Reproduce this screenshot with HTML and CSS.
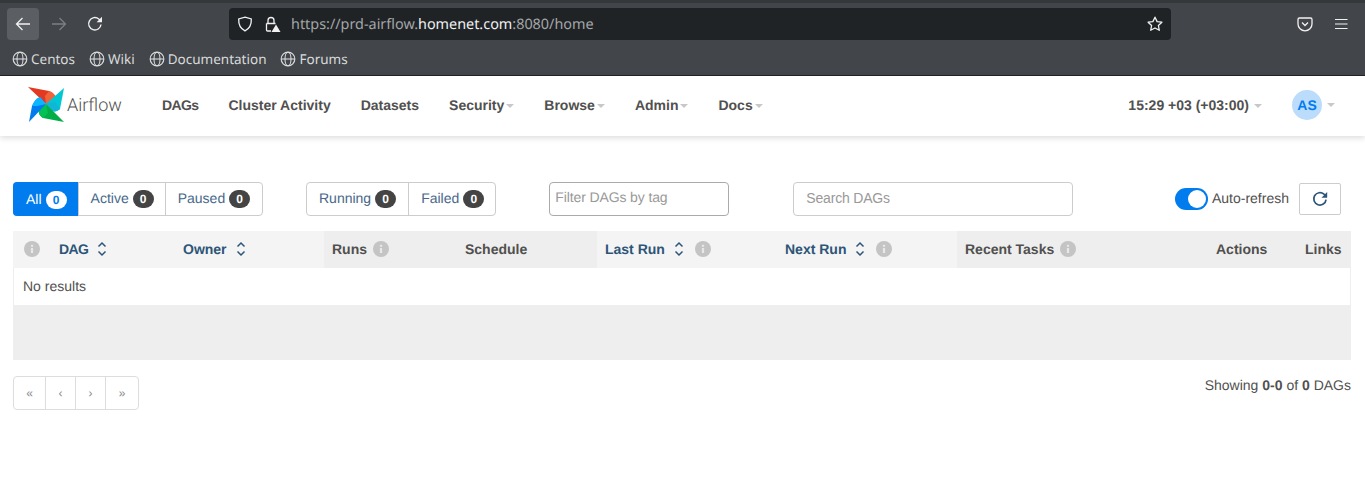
FILE: index.html
```html
<!DOCTYPE html>
<html lang="en">
<head>
    <meta charset="UTF-8">
    <meta name="viewport" content="width=device-width, initial-scale=1.0">
    <title>Airflow - DAGs</title>
    <link rel="stylesheet" href="styles.css">
</head>
<body>
    <svg class="icon-defs" width="0" height="0" aria-hidden="true">
        <defs>
            <symbol id="globe" viewBox="0 0 16 16">
                <circle cx="8" cy="8" r="6.8" fill="none" stroke="currentColor" stroke-width="1.2"/>
                <ellipse cx="8" cy="8" rx="3" ry="6.8" fill="none" stroke="currentColor" stroke-width="1.1"/>
                <path d="M1.2 8h13.6" stroke="currentColor" stroke-width="1.1"/>
            </symbol>
            <symbol id="sort" viewBox="0 0 10 16">
                <path d="M1.500 5.500 5 2l3.500 3.500M1.500 10.500 5 14l3.500-3.500" fill="none" stroke="currentColor" stroke-width="1.500"/>
            </symbol>
            <symbol id="info" viewBox="0 0 16 16">
                <circle cx="8" cy="8" r="8" fill="#c4c4c4"/>
                <rect x="6.900" y="7" width="2.200" height="5" fill="#e8e8e8"/>
                <rect x="6.900" y="3.800" width="2.200" height="2" fill="#e8e8e8"/>
            </symbol>
        </defs>
    </svg>

    <header class="browser">
        <div class="browser-toolbar">
            <div class="nav-buttons">
                <button class="nav-btn nav-btn-active">
                    <svg width="16" height="16" viewBox="0 0 16 16"><path d="M15 8H1.500M7.500 2 1.500 8l6 6" fill="none" stroke="#f1f1f1" stroke-width="1.300"/></svg>
                </button>
                <button class="nav-btn">
                    <svg width="16" height="16" viewBox="0 0 16 16"><path d="M1 8h13.500M8.500 2l6 6-6 6" fill="none" stroke="#7c7f82" stroke-width="1.300"/></svg>
                </button>
                <button class="nav-btn">
                    <svg width="16" height="16" viewBox="0 0 16 16"><path d="M14 8.500A6.200 6.200 0 1 1 11.800 3L14 5" fill="none" stroke="#f1f1f1" stroke-width="1.400"/><path d="M15 .8v5.400H9.600z" fill="#f1f1f1"/></svg>
                </button>
            </div>
            <div class="urlbar">
                <svg class="url-shield" width="16" height="16" viewBox="0 0 16 16"><path d="M8 1.200 14.300 3c.3 5.800-1.700 9.600-6.300 11.900C3.400 12.600 1.400 8.800 1.700 3z" fill="none" stroke="#f1f1f1" stroke-width="1.300"/></svg>
                <svg class="url-lock" width="17" height="17" viewBox="0 0 17 17"><path d="M4 7V4.500a3 3 0 0 1 6 0V7M2.500 7.500h9M7 15H3.500a1 1 0 0 1-1-1V7.500" fill="none" stroke="#f1f1f1" stroke-width="1.300"/><path d="M12 8.500l4.500 7.500h-9z" fill="#f1f1f1"/></svg>
                <span class="url-text">https://prd-airflow.<b>homenet.com</b>:8080/home</span>
                <svg class="url-star" width="16" height="16" viewBox="0 0 16 16"><path d="M8 1.200l2.100 4.400 4.800.6-3.500 3.300.9 4.800L8 12l-4.300 2.300.9-4.800L1.100 6.200l4.800-.6z" fill="none" stroke="#f1f1f1" stroke-width="1.300" stroke-linejoin="round"/></svg>
            </div>
            <div class="toolbar-right">
                <svg width="16" height="16" viewBox="0 0 16 16"><path d="M2.500 2h11A1.500 1.500 0 0 1 15 3.500V8A7 6.800 0 0 1 1 8V3.500A1.500 1.500 0 0 1 2.500 2z" fill="none" stroke="#f1f1f1" stroke-width="1.300"/><path d="M5 6.500l3 3 3-3" fill="none" stroke="#f1f1f1" stroke-width="1.300"/></svg>
                <svg width="14" height="12" viewBox="0 0 14 12"><path d="M1 1.500h12.500M1 6h12.500M1 10.500h12.500" stroke="#f1f1f1" stroke-width="1.200"/></svg>
            </div>
        </div>
        <div class="bookmarks">
            <a class="bookmark"><svg width="16" height="16"><use href="#globe"/></svg>Centos</a>
            <a class="bookmark"><svg width="16" height="16"><use href="#globe"/></svg>Wiki</a>
            <a class="bookmark"><svg width="16" height="16"><use href="#globe"/></svg>Documentation</a>
            <a class="bookmark"><svg width="16" height="16"><use href="#globe"/></svg>Forums</a>
        </div>
    </header>

    <nav class="navbar">
        <a class="brand">
            <svg class="brand-logo" width="37" height="37" viewBox="0 0 37 37">
                <path d="M0 1 21 5C26 7 29 11 28 14L18 18Z" fill="#e43921"/>
                <path d="M21 5C26 7 29 11 28 14L18 18L17 10Z" fill="#f0643c"/>
                <path d="M36 2 32 23C29 26 25 26 22 24L18 18Z" fill="#00c7d4"/>
                <path d="M32 23C29 26 25 26 22 24L18 18L27 16Z" fill="#11b5d8"/>
                <path d="M36 36 15 32C12 30 10 27 11 24L18 18Z" fill="#00ad46"/>
                <path d="M15 32C12 30 10 27 11 24L18 18L20 27Z" fill="#04c155"/>
                <path d="M1 36 4 20C6 15 9 12 12 11L18 18Z" fill="#017cee"/>
                <path d="M4 20C6 15 9 12 12 11L18 18L9 20Z" fill="#0cb6ff"/>
            </svg>
            <span class="brand-name">Airflow</span>
        </a>
        <ul class="nav-links">
            <li><a class="tight">DAGs</a></li>
            <li><a>Cluster Activity</a></li>
            <li><a>Datasets</a></li>
            <li><a class="caret">Security</a></li>
            <li><a class="caret">Browse</a></li>
            <li><a class="caret">Admin</a></li>
            <li><a class="caret">Docs</a></li>
        </ul>
        <div class="nav-right">
            <span class="clock caret">15:29 +03 (+03:00)</span>
            <span class="user caret"><span class="avatar">AS</span></span>
        </div>
    </nav>

    <main class="content">
        <div class="toolbar">
            <div class="btn-group group-status">
                <a class="btn btn-active">All <span class="badge">0</span></a>
                <a class="btn">Active <span class="badge">0</span></a>
                <a class="btn">Paused <span class="badge">0</span></a>
            </div>
            <div class="btn-group group-state">
                <a class="btn">Running <span class="badge">0</span></a>
                <a class="btn">Failed <span class="badge">0</span></a>
            </div>
            <div class="tag-filter">Filter DAGs by tag</div>
            <input class="search" type="text" placeholder="Search DAGs">
            <div class="refresh">
                <span class="switch"></span>
                <span class="refresh-label">Auto-refresh</span>
                <button class="refresh-btn">
                    <svg width="16" height="16" viewBox="0 0 14 14"><path d="M12.300 7.500A5.400 5.400 0 1 1 10.500 2.800L12 4" fill="none" stroke="#2d5578" stroke-width="1.500"/><path d="M13.300.8v5H8.300z" fill="#2d5578"/></svg>
                </button>
            </div>
        </div>

        <table class="dag-table">
            <thead>
                <tr>
                    <th class="col-info sortable"><svg class="info" width="16" height="16"><use href="#info"/></svg></th>
                    <th class="col-dag sortable"><a class="tight">DAG</a><svg class="sort" width="10" height="16"><use href="#sort"/></svg></th>
                    <th class="col-owner sortable"><a>Owner</a><svg class="sort" width="10" height="16"><use href="#sort"/></svg></th>
                    <th class="col-runs">Runs<svg class="info" width="16" height="16"><use href="#info"/></svg></th>
                    <th class="col-schedule">Schedule</th>
                    <th class="col-last sortable"><a>Last Run</a><svg class="sort" width="10" height="16"><use href="#sort"/></svg><svg class="info" width="16" height="16"><use href="#info"/></svg></th>
                    <th class="col-next sortable"><a>Next Run</a><svg class="sort" width="10" height="16"><use href="#sort"/></svg><svg class="info" width="16" height="16"><use href="#info"/></svg></th>
                    <th class="col-tasks">Recent Tasks<svg class="info" width="16" height="16"><use href="#info"/></svg></th>
                    <th class="col-actions">Actions</th>
                    <th class="col-links">Links</th>
                </tr>
            </thead>
            <tbody>
                <tr class="empty-row"><td colspan="10">No results</td></tr>
                <tr class="filler-row"><td colspan="10"></td></tr>
            </tbody>
        </table>

        <div class="table-footer">
            <ul class="pagination">
                <li>«</li>
                <li>‹</li>
                <li>›</li>
                <li>»</li>
            </ul>
            <p class="showing">Showing <b>0-0</b> of <b>0</b> DAGs</p>
        </div>
    </main>
</body>
</html>
```

FILE: styles.css
```css
* {
    box-sizing: border-box;
}

body {
    margin: 0;
    background: #fff;
    color: #51504f;
    font-family: 'Liberation Sans', Arial, sans-serif;
    font-size: 14px;
    text-rendering: geometricPrecision;
    overflow: hidden;
}

.icon-defs {
    position: absolute;
}

.tight {
    letter-spacing: -0.6px;
}

/* browser frame */
.browser {
    height: 76px;
    background: #42464a;
    border-top: 3px solid #35383b;
    border-bottom: 1px solid #202326;
    color: #f1f1f1;
    font-family: 'Noto Sans', sans-serif;
}

.browser-toolbar {
    display: flex;
    align-items: center;
    height: 38px;
    padding: 4px 0 0 7px;
}

.nav-buttons {
    display: flex;
    gap: 4px;
    width: 222px;
}

.nav-btn {
    display: flex;
    align-items: center;
    justify-content: center;
    width: 32px;
    height: 32px;
    padding: 0;
    border: none;
    border-radius: 4px;
    background: none;
}

.nav-btn-active {
    background: #5b5f63;
}

.urlbar {
    display: flex;
    align-items: center;
    width: 942px;
    height: 32px;
    padding: 0 8px;
    border-radius: 4px;
    background: #1f2326;
}

.url-lock {
    margin-left: 11px;
}

.url-text {
    margin-left: 10px;
    flex: 1;
    color: #a4a6a8;
    font-size: 14.400px;
}

.url-text b {
    color: #f1f1f1;
    font-weight: 400;
}

.toolbar-right {
    display: flex;
    align-items: center;
    gap: 21px;
    margin-left: 126px;
}

.bookmarks {
    display: flex;
    gap: 14px;
    padding: 9px 0 0 12px;
    font-size: 13.500px;
    color: #d9dadb;
}

.bookmark {
    display: flex;
    align-items: center;
    gap: 3px;
}

/* airflow navbar */
.navbar {
    display: flex;
    align-items: center;
    height: 60px;
    padding: 0 30px 2px 28px;
    box-shadow: 0 2px 6px rgba(0, 0, 0, 0.14);
}

.brand {
    display: flex;
    align-items: center;
    width: 120px;
}

.brand-logo {
    margin-top: -2px;
}

.brand-name {
    margin-left: 2px;
    color: #51504f;
    font-family: 'Roboto', sans-serif;
    font-size: 18px;
    font-weight: 300;
}

.nav-links {
    display: flex;
    gap: 30px;
    margin: 0 0 0 14px;
    padding: 0;
    list-style: none;
    font-weight: 700;
}

.caret::after {
    content: '';
    display: inline-block;
    margin-left: 2px;
    vertical-align: 2px;
    border-top: 4px solid #c8c8c8;
    border-left: 4px solid transparent;
    border-right: 4px solid transparent;
}

.nav-right {
    display: flex;
    align-items: center;
    margin-left: auto;
    font-weight: 700;
}

.clock::after {
    margin-left: 5px;
}

.user {
    display: flex;
    align-items: center;
    margin-left: 30px;
}

.user::after {
    margin-left: 5px;
    vertical-align: 0;
}

.avatar {
    display: flex;
    align-items: center;
    justify-content: center;
    width: 30px;
    height: 30px;
    border-radius: 50%;
    background: #bbdcfb;
    color: #017cee;
}

/* filters */
.content {
    padding: 46px 14px 0 13px;
}

.toolbar {
    display: flex;
    align-items: center;
    height: 34px;
}

.btn-group {
    display: flex;
    height: 34px;
    border: 1px solid #ccc;
    border-radius: 4px;
    line-height: 30px;
}

.group-status {
    width: 250px;
}

.group-state {
    margin-left: 43px;
}

.btn {
    display: flex;
    align-items: center;
    gap: 4px;
    padding: 0 11px 2px 12px;
    color: #47688a;
    border-left: 1px solid #ccc;
}

.btn:first-child {
    border-left: none;
}

.group-state .btn:first-child {
    padding-right: 12px;
}

.btn-active {
    margin: -1px 0 -1px -1px;
    padding: 0 11px 0 13px;
    background: #017cee;
    color: #fff;
    border-radius: 4px 0 0 4px;
}

.badge {
    min-width: 21px;
    margin-top: 2px;
    padding: 2px 7px;
    border-radius: 9px;
    background: #444;
    color: #fff;
    font-size: 12px;
    font-weight: 700;
    line-height: 14px;
    text-align: center;
}

.btn-active .badge {
    background: #fff;
    color: #017cee;
}

.tag-filter {
    width: 180px;
    height: 34px;
    margin-left: 53px;
    padding: 6px 5px;
    border: 1px solid #aaa;
    border-radius: 4px;
    color: #999;
    letter-spacing: -0.12px;
}

.search {
    width: 280px;
    height: 34px;
    margin-left: 64px;
    padding: 0 12px 2px;
    border: 1px solid #ccc;
    border-radius: 4px;
    font-family: inherit;
    font-size: 14px;
}

.search::placeholder {
    color: #999;
    letter-spacing: -0.18px;
}

.refresh {
    display: flex;
    align-items: center;
    margin-left: auto;
    margin-right: 10px;
}

.switch {
    position: relative;
    width: 33px;
    height: 22px;
    border-radius: 11px;
    background: #017cee;
}

.switch::after {
    content: '';
    position: absolute;
    top: 2px;
    right: 2px;
    width: 18px;
    height: 18px;
    border-radius: 50%;
    background: #fff;
}

.refresh-label {
    margin: 0 0 2px 4px;
}

.refresh-btn {
    display: flex;
    align-items: center;
    justify-content: center;
    width: 42px;
    height: 32px;
    margin-left: 10px;
    padding: 0;
    border: 1px solid #ccc;
    border-radius: 2px;
    background: #fff;
}

/* table */
.dag-table {
    width: 1338px;
    margin-top: 15px;
    border-collapse: collapse;
    table-layout: fixed;
}

.dag-table th {
    height: 37px;
    padding: 0 8px 2px;
    background: #eee;
    color: #51504f;
    font-weight: 700;
    text-align: left;
    white-space: nowrap;
}

.dag-table th.sortable {
    background: #f4f4f4;
}

.dag-table th a {
    color: #2d5578;
}

.col-info { width: 38px; }
.col-dag { width: 124px; }
.col-owner { width: 149px; }
.col-runs { width: 133px; }
.col-schedule { width: 140px; }
.col-last { width: 180px; }
.col-next { width: 180px; }
.col-tasks { width: 251px; }
.col-actions { width: 89px; }
.col-links { width: 54px; }

.dag-table th.col-actions {
    text-align: right;
    padding-right: 30px;
}

.dag-table th.col-links {
    text-align: right;
    padding-right: 10px;
}

.info {
    margin-left: 6px;
    vertical-align: -3px;
}

.col-info .info {
    margin-left: 3px;
}

.col-last .info,
.col-next .info {
    margin-left: 11px;
}

.sort {
    margin-left: 9px;
    color: #2d5578;
    vertical-align: -3px;
}

.empty-row td {
    height: 37px;
    padding: 0 10px 2px;
    box-shadow: inset 1px 0 #eee, inset -1px 0 #eee;
}

.filler-row td {
    height: 55px;
    background: #eee;
}

/* footer */
.table-footer {
    display: flex;
    justify-content: space-between;
    margin-top: 16px;
}

.pagination {
    display: flex;
    height: 34px;
    margin: 0;
    padding: 0;
    border: 1px solid #ddd;
    border-radius: 4px;
    list-style: none;
    color: #888;
    font-size: 12px;
}

.pagination li {
    display: flex;
    align-items: center;
    justify-content: center;
    width: 30px;
    border-left: 1px solid #ddd;
}

.pagination li:first-child {
    width: 31px;
    border-left: none;
}

.pagination li:last-child {
    width: 33px;
}

.showing {
    margin: 1px 0 0;
}
```
